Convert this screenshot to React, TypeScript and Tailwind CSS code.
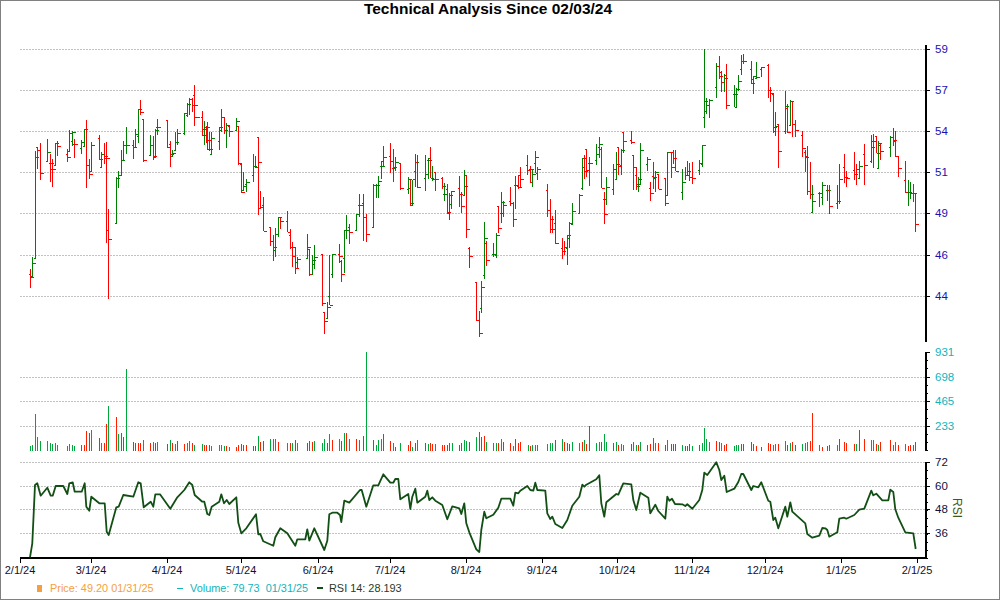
import React from 'react';

type Bar = [string, number, number, number, number, number];
type Vol = [string, number, number];

// all bar numbers were read off 3x crops: x, high, low, open, close
const partA: Bar[] = [
  ['r',91,808,863,823,832],['g',97,770,832,830,790],['g',107,453,775,775,472],['r',112,441,508,441,451],['r',121,430,540,451,520],
  ['g',142,418,484,484,457],['r',152,463,545,490,490],['r',157,478,560,508,508],['g',166,430,499,497,430],['r',172,424,467,430,439],
  ['r',202,448,486,463,472],['g',208,391,454,454,400],['g',218,394,439,424,397],['r',223,418,473,433,433],['g',244,421,462,445,427],
  ['g',254,388,442,439,388],['r',259,361,563,388,496],['r',268,478,536,496,523],['g',274,427,514,514,436],['r',298,406,481,415,478],
  ['g',304,457,502,502,463],['r',313,430,493,463,469],['r',319,427,728,475,475],['r',325,628,896,691,718],['g',349,530,670,670,536],
  ['g',355,514,565,535,526],['g',364,451,526,526,481],['g',370,424,481,481,436],['g',379,382,463,436,436],['r',400,421,476,436,442],
  ['g',406,388,442,442,403],['g',415,328,430,409,328],['r',421,301,346,328,337],['r',430,358,487,358,481],['g',451,406,466,466,436],
  ['r',460,409,481,436,469],['g',466,388,472,472,391],['r',472,358,406,382,382],['r',502,361,445,361,442],['r',511,424,500,433,463],
  ['g',517,450,472,469,460],['g',526,397,451,451,427],['g',532,388,436,427,400],['g',553,340,406,400,340],['g',562,310,352,346,313],
  ['g',568,295,346,313,298],['r',577,295,335,298,316],['r',583,256,377,286,316],['r',589,352,352,352,352],['r',607,334,409,352,406],
  ['g',613,364,436,388,388],['r',619,379,430,382,382],['r',622,367,451,382,420],['r',628,397,454,448,448],['g',634,397,463,463,415],
  ['g',658,382,451,424,382],['g',664,328,397,391,352],['r',673,352,403,352,391],['g',679,370,445,391,376],['r',688,379,411,379,394],
  ['g',709,355,391,391,364],['r',715,379,494,379,490],['r',724,490,580,493,577],['g',730,517,572,572,558],['g',739,538,575,553,547],
  ['g',760,463,545,526,499],['g',766,469,505,499,502],['r',775,412,644,412,487],['r',781,574,625,625,622],['r',790,592,694,615,694],
  ['r',811,682,739,682,724],['r',820,706,782,724,742],['g',826,685,770,751,702],['g',835,652,712,702,652],['r',841,652,686,652,664],
  ['r',862,634,697,664,697],['r',871,688,748,706,742],['r',877,727,800,742,769],['r',886,742,823,742,805],['g',892,772,805,787,778],
  ['g',922,702,775,775,742],['r',928,748,827,748,822],['g',937,764,822,822,781],['g',943,736,806,793,772],['r',967,763,919,763,910],
  ['r',973,937,1001,937,964],['g',982,907,955,955,922],['g',988,766,915,889,915],
];

// offset 990,300
const partB: Bar[] = [
  ['g',7,462,533,523,463],['r',28,433,490,463,469],['r',34,479,545,484,523],['g',43,391,518,475,391],['g',49,346,418,391,391],
  ['r',58,373,433,382,397],['g',79,343,394,391,343],['g',88,283,352,316,316],['r',100,283,424,310,352],['r',109,343,425,352,403],
  ['g',130,253,382,382,256],['g',139,253,293,256,256],['g',145,229,293,256,244],['g',154,184,236,199,199],['g',160,139,199,184,172],
  ['r',181,130,220,169,184],['r',190,148,245,205,202],['g',196,172,212,205,187],['r',211,190,271,190,265],['g',235,232,283,268,238],
  ['r',241,241,317,265,311],['g',247,241,316,316,238],['g',256,163,262,214,187],['r',262,166,265,187,262],['g',286,166,274,235,223],
  ['g',295,175,238,181,181],['r',301,142,235,175,235],['g',307,199,244,235,238],['r',316,217,272,217,238],['r',337,232,268,235,259],
  ['g',343,250,302,283,283],['r',352,253,343,268,337],['g',358,280,361,340,286],['g',364,274,328,313,274],['r',388,229,322,265,283],
  ['r',394,277,338,283,319],['g',403,211,286,286,259],['r',409,226,415,226,388],['r',418,442,503,445,469],['r',439,548,664,548,661],
  ['r',448,634,712,661,700],['g',454,544,640,625,562],['g',463,367,538,526,415],['r',469,424,499,430,481],['g',490,430,472,463,463],
  ['g',499,400,473,466,406],['r',505,319,400,319,385],['g',514,277,370,340,307],['g',520,304,352,340,316],['r',541,262,319,304,310],
  ['r',550,307,382,310,358],['g',556,229,328,256,256],['r',565,226,268,259,262],['r',571,202,265,226,238],['r',592,166,226,196,211],
  ['r',601,199,250,208,208],['g',607,208,262,247,223],['g',616,154,220,190,172],['g',622,202,241,220,208],['r',652,253,352,271,331],
  ['r',661,298,400,331,358],['r',667,349,400,388,388],['r',676,331,433,370,430],['r',697,415,478,445,454],['r',703,424,466,454,442],
  ['g',712,406,496,445,406],['g',718,367,445,415,370],['g',727,310,373,373,334],['g',748,283,340,340,286],['g',757,175,271,265,175],
  ['r',763,166,238,202,214],['r',769,148,232,148,211],['g',778,172,259,190,190],['g',799,133,196,181,163],['g',808,112,175,142,133],
  ['r',814,142,265,148,265],['r',823,277,371,298,343],['g',829,232,316,298,262],['g',850,193,286,268,208],['g',859,157,241,238,193],
  ['r',865,142,226,142,199],['g',874,148,226,196,151],['r',880,98,160,98,124],['r',904,94,133,121,127],['r',910,166,271,166,202],
  ['r',919,202,271,226,259],['g',925,232,275,253,238],['g',931,130,256,253,151],['g',952,172,213,193,178],['r',961,247,302,265,280],
  ['r',970,187,268,229,232],['g',976,214,276,235,217],['r',985,223,268,223,268],['r',1006,235,319,235,310],['g',1012,157,286,286,157],
];

// offset 2010,90
const partC: Bar[] = [
  ['r',3,367,443,367,411],['r',9,361,403,367,385],['r',15,361,423,385,423],['g',37,418,509,487,458],['g',46,412,451,458,437],
  ['g',52,394,437,437,424],['r',58,400,452,424,442],['r',67,397,461,442,445],['g',88,391,434,421,400],['g',97,345,412,403,345],
  ['g',103,58,293,262,214],['g',109,205,253,244,226],['g',118,208,263,226,211],['g',139,100,203,172,109],['r',148,79,146,109,139],
  ['r',154,124,187,127,157],['g',163,133,187,157,145],['r',169,103,238,135,226],['g',193,166,232,193,193],['g',199,175,232,232,178],
  ['g',205,136,184,178,154],['g',214,76,136,118,94],['g',220,73,103,94,94],['r',244,94,163,118,160],['g',250,139,193,148,139],
  ['g',259,97,148,145,142],['g',274,112,141,118,112],['r',295,103,203,106,181],['r',301,172,217,181,190],['r',310,193,308,193,292],
  ['g',316,247,317,304,289],['r',325,283,415,283,364],['g',346,184,313,304,229],['r',352,223,310,235,307],['g',361,211,289,286,214],
  ['r',367,214,321,214,283],['r',376,271,322,283,301],['r',397,304,382,316,355],['r',406,361,427,367,382],['r',412,349,496,379,484],
  ['r',421,397,508,484,493],['g',427,466,547,547,514],['r',448,487,532,490,490],['g',457,457,524,502,466],['g',472,466,512,481,481],
  ['r',478,466,553,481,529],['g',502,466,536,520,514],['g',508,403,523,514,448],['r',523,373,460,412,442],['r',529,424,470,442,445],
  ['r',553,367,451,421,433],['r',559,403,466,433,418],['g',568,394,445,445,409],['r',583,343,466,373,406],['g',604,316,400,394,352],
  ['g',610,313,415,334,334],['r',619,319,370,319,370],['g',625,334,415,415,340],['r',631,340,391,346,364],['g',661,319,380,352,323],
  ['r',670,295,347,323,331],['r',676,304,382,334,379],['r',685,379,440,379,415],['r',706,394,490,451,487],['g',715,451,529,487,487],
  ['g',721,457,506,487,490],['r',730,463,515,490,490],['r',736,490,605,490,583],
];

const shift = (rows: Bar[], ox: number, oy: number): Bar[] =>
  rows.map(([c, x, h, l, o, v]) => [c, x + ox, h + oy, l + oy, o + oy, v + oy]);

const bars = [...partA, ...shift(partB, 990, 300), ...shift(partC, 2010, 90)];

// volume: colour, x, top. first list has its base at 153, the other two at 333
const volA: Vol[] = [
  ['g',91,138],['g',97,136],['g',107,42],['g',112,112],['g',121,123],['g',142,124],['g',152,128],['g',157,132],['g',166,130],['g',172,135],
  ['g',202,138],['g',208,133],['g',218,136],['g',223,138],['r',244,135],['r',254,135],['r',259,93],['r',268,100],['g',274,90],['r',298,114],
  ['g',304,130],['r',313,128],['r',319,72],['g',325,18],['r',349,52],['g',355,103],['r',364,100],['r',370,111],['g',379,-93],['r',400,126],
  ['r',406,128],['r',415,130],['r',421,130],['g',430,120],['r',451,130],['g',460,127],['r',466,130],['g',472,127],['r',502,132],['g',511,120],
  ['r',517,130],['g',526,132],['r',532,124],['r',553,132],['g',562,130],['g',568,124],['r',577,130],['g',583,134],['g',607,132],['r',613,134],
  ['r',619,135],['r',628,136],['g',634,138],['g',658,135],['g',664,134],['g',673,138],['r',679,138],['g',688,140],['r',709,140],['r',715,135],
  ['r',724,132],['r',730,134],['r',739,135],['r',760,138],['r',766,138],['g',775,108],['r',781,127],['r',790,124],['g',811,117],['g',820,117],
  ['g',826,118],['r',835,127],['g',862,130],['r',871,130],['g',877,128],['r',886,120],['g',892,130],['r',922,130],['r',928,124],['r',937,125],
  ['g',943,123],['g',967,128],['g',973,118],['r',982,130],['g',988,102],
];
const volB: Vol[] = [
  ['r',7,300],['g',28,297],['r',34,304],['g',43,280],['r',49,280],['g',58,298],['r',79,297],['g',88,301],['r',100,288],['g',109,37],
  ['r',130,300],['g',139,316],['g',145,300],['g',154,298],['r',160,282],['r',181,304],['g',190,310],['r',196,320],['g',211,310],['r',235,316],
  ['r',241,304],['g',247,320],['r',256,310],['g',262,301],['r',286,310],['g',295,313],['r',301,310],['r',307,311],['g',316,313],['r',337,315],
  ['r',343,314],['r',352,314],['r',358,310],['g',367,310],['r',388,316],['r',394,310],['g',403,301],['g',409,304],['r',418,306],['g',439,292],
  ['r',448,276],['r',454,292],['r',463,288],['g',469,306],['g',490,310],['g',499,310],['r',505,308],['g',514,298],['r',520,306],['r',541,310],
  ['g',550,318],['r',556,298],['r',565,310],['r',571,306],['g',595,316],['r',601,318],['g',607,316],['g',616,316],['g',622,316],['g',652,312],
  ['g',661,310],['g',667,310],['r',676,300],['g',697,298],['r',703,306],['r',712,308],['r',718,311],['g',727,307],['g',748,308],['r',757,306],
  ['g',763,300],['r',769,312],['r',778,258],['g',799,308],['g',808,306],['r',814,306],['g',823,282],['g',829,306],['r',850,308],['g',859,306],
  ['r',865,316],['g',874,312],['g',880,315],['r',904,312],['g',910,306],['g',919,316],['r',925,316],['g',931,306],['r',952,316],['r',961,312],
  ['r',970,294],['g',976,308],['r',985,308],['r',1006,314],['g',1012,300],
];
const volC: Vol[] = [
  ['r',3,312],['r',9,313],['r',15,312],['g',37,316],['r',46,318],['r',52,318],['r',58,312],['g',67,318],['r',88,316],['g',97,310],
  ['g',103,264],['g',109,298],['g',118,306],['r',139,304],['r',148,306],['g',154,310],['r',163,314],['r',169,313],['g',193,318],['g',199,316],
  ['g',205,315],['r',214,312],['r',220,312],['r',244,307],['r',250,312],['r',259,318],['r',274,321],['r',295,310],['r',301,312],['g',310,316],
  ['g',316,313],['r',325,312],['g',346,304],['r',352,316],['g',361,310],['r',367,306],['r',376,316],['g',397,313],['g',406,310],['g',412,306],
  ['r',421,304],['r',427,219],['g',448,316],['r',457,322],['r',472,318],['r',478,316],['g',502,316],['r',508,297],['r',523,306],['r',529,308],
  ['r',553,312],['g',559,312],['r',568,270],['r',583,297],['g',604,301],['g',610,301],['r',619,312],['g',625,316],['r',631,306],['r',661,301],
  ['g',670,316],['g',676,307],['r',685,316],['g',706,312],['r',715,318],['r',721,316],['r',730,316],['r',736,307],
];

const volumes: { c: string; x: number; top: number }[] = [
  ...volA.map(([c, x, t]) => ({ c, x, top: 400 + t / 3 })),
  ...volB.map(([c, x, t]) => ({ c, x: x + 990, top: 340 + t / 3 })),
  ...volC.map(([c, x, t]) => ({ c, x: x + 2010, top: 340 + t / 3 })),
];

const rsiA = [[90,472],[97,430],[105,255],[112,250],[122,287],[142,263],[152,287],[158,287],[167,258],[190,258],[202,282],[208,250],[218,247],[224,275],[245,275],[254,250],[259,320],[268,332],[274,290],[298,310],[314,310],[320,395],[326,405],[349,322],[356,320],[370,285],[400,290],[415,247],[422,250],[431,322],[452,305],[460,320],[466,283],[480,283],[511,326],[532,292],[553,270],[568,247],[577,255],[584,285],[607,305],[613,305],[622,342],[628,345],[635,320],[658,305],[664,283],[672,310],[680,300],[688,312],[709,292],[715,368],[724,400],[739,385],[768,343],[775,403],[781,402],[790,424],[820,437],[826,412],[841,385],[862,400],[886,437],[892,418],[916,418],[922,388],[928,422],[943,385],[973,450],[982,422],[988,343]];
const rsiB = [[7,518],[22,518],[30,525],[34,546],[43,482],[58,488],[90,450],[95,450],[109,500],[130,436],[145,436],[160,403],[181,428],[190,428],[196,417],[205,417],[211,478],[235,462],[241,507],[247,470],[256,446],[262,488],[286,470],[292,452],[298,480],[307,472],[316,482],[337,495],[352,538],[367,499],[388,505],[394,522],[403,490],[409,550],[418,577],[439,628],[448,636],[454,570],[463,515],[469,535],[490,524],[505,503],[514,476],[541,476],[550,497],[556,458],[565,460],[571,452],[592,438],[601,450],[610,452],[616,428],[622,450],[646,452],[652,520],[661,537],[667,530],[676,552],[697,564],[712,540],[727,497],[748,470],[757,434],[763,440],[769,434],[799,418],[808,406],[814,490],[823,530],[829,487],[859,462],[865,464],[880,430],[904,433],[910,480],[919,510],[931,458],[955,473],[961,520],[976,494],[985,513],[1006,536],[1012,470],[1018,482]];
const rsiC = [[6,476],[15,492],[37,493],[46,498],[52,493],[67,506],[88,480],[97,450],[103,398],[112,405],[139,367],[148,390],[154,420],[163,407],[170,456],[193,446],[205,426],[214,402],[220,402],[244,450],[250,438],[265,442],[274,427],[295,482],[301,485],[310,540],[316,533],[325,565],[346,500],[352,530],[361,487],[367,515],[406,550],[412,582],[427,593],[448,587],[457,564],[466,565],[472,570],[478,590],[502,577],[508,536],[523,533],[529,536],[553,525],[568,509],[583,506],[604,452],[610,466],[619,461],[637,481],[655,481],[661,449],[670,456],[676,508],[685,533],[706,577],[730,580],[737,627]];

const rsiPoints = [
  ...rsiA.map(([x, y]) => `${(x / 3).toFixed(1)},${(400 + y / 3).toFixed(1)}`),
  ...rsiB.map(([x, y]) => `${(330 + x / 3).toFixed(1)},${(340 + y / 3).toFixed(1)}`),
  ...rsiC.map(([x, y]) => `${(670 + x / 3).toFixed(1)},${(340 + y / 3).toFixed(1)}`),
].join(' ');

const gridY = [49.5, 90.5, 131.5, 172.5, 213.5, 255.5, 296.5, 377.5, 401.5, 426.5, 462.5, 486.5, 509.5, 533.5];
const priceLabels: [string, number][] = [['59', 49], ['57', 90], ['54', 131], ['51', 172], ['49', 213], ['46', 255], ['44', 296]];
const volLabels: [string, number][] = [['931', 352], ['698', 377], ['465', 401], ['233', 426]];
const rsiLabels: [string, number][] = [['72', 462], ['60', 486], ['48', 509], ['36', 533]];
const dates: [string, number][] = [
  ['2/1/24', 20], ['3/1/24', 91], ['4/1/24', 167], ['5/1/24', 241], ['6/1/24', 318], ['7/1/24', 390], ['8/1/24', 466],
  ['9/1/24', 542], ['10/1/24', 617], ['11/1/24', 692], ['12/1/24', 765], ['1/1/25', 841], ['2/1/25', 917],
];

const volTicks = Array.from({ length: 13 }, (_, i) => 352 + i * 8.2);
const rsiTicks = Array.from({ length: 13 }, (_, i) => 462 + i * 8);

const Chart = () => (
  <svg viewBox="1 20 998 556" className="block w-[998px] h-[556px]">
    <g shapeRendering="crispEdges">
      {gridY.map(y => (
        <line key={y} x1={20} x2={925} y1={y} y2={y} stroke="#c2c2c2" strokeDasharray="2 1" />
      ))}
      {bars.map(([c, x, hi, lo, open, close], i) => {
        const bx = Math.floor(x / 3) + 0.5;
        const color = c === 'r' ? '#ff0000' : '#008000';
        return (
          <g key={i} stroke={color}>
            <line x1={bx} x2={bx} y1={hi / 3} y2={lo / 3} />
            <line x1={bx - 2} x2={bx} y1={Math.floor(open / 3) + 0.5} y2={Math.floor(open / 3) + 0.5} />
            <line x1={bx} x2={bx + 3} y1={Math.floor(close / 3) + 0.5} y2={Math.floor(close / 3) + 0.5} />
          </g>
        );
      })}
      {volumes.map(({ c, x, top }, i) => {
        const bx = Math.floor(x / 3) + 0.5;
        return <line key={i} x1={bx} x2={bx} y1={top} y2={451} stroke={c === 'r' ? '#ff2000' : '#00a83c'} />;
      })}
      {/* axes */}
      <g stroke="#000">
        <line x1={925.5} x2={925.5} y1={45} y2={342} strokeWidth={2} />
        <line x1={925.5} x2={925.5} y1={352} y2={451} strokeWidth={2} />
        <line x1={925.5} x2={925.5} y1={462} y2={559} strokeWidth={2} />
        <line x1={20} x2={925} y1={558} y2={558} strokeWidth={2} />
        {[...priceLabels, ...volLabels, ...rsiLabels].map(([l, y]) => (
          <line key={l} x1={926} x2={930} y1={y + 0.5} y2={y + 0.5} />
        ))}
        {volTicks.map(y => (
          <line key={y} x1={926} x2={928} y1={Math.round(y) + 0.5} y2={Math.round(y) + 0.5} />
        ))}
        {rsiTicks.map(y => (
          <line key={y} x1={926} x2={928} y1={y + 0.5} y2={y + 0.5} />
        ))}
        {dates.map(([l, x]) => (
          <line key={l} x1={x + 0.5} x2={x + 0.5} y1={558} y2={563} />
        ))}
      </g>
    </g>
    <polyline points={rsiPoints} fill="none" stroke="#124f14" strokeWidth={1.8} strokeLinejoin="round" />
    <g className="text-[11.5px]">
      {priceLabels.map(([l, y]) => (
        <text key={l} x={935} y={y + 4} fill="#1a10b0">{l}</text>
      ))}
      {volLabels.map(([l, y]) => (
        <text key={l} x={935} y={y + 4} fill="#10b4bc">{l}</text>
      ))}
      {rsiLabels.map(([l, y]) => (
        <text key={l} x={935} y={y + 4} fill="#101040">{l}</text>
      ))}
      {dates.map(([l, x]) => (
        <text key={l} x={x} y={574} textAnchor="middle" fill="#101030" className="text-[11px]">{l}</text>
      ))}
      <text transform="translate(953 498) rotate(90)" fill="#3c5a20" className="text-[12px]">RSI</text>
    </g>
  </svg>
);

export default function App() {
  return (
    <div className="w-[1000px] h-[600px] bg-white border border-[#808080] flex flex-col font-['Liberation_Sans',Arial,sans-serif] overflow-hidden">
      <div className="h-[16px] mb-[3px] pr-[24px] flex items-center justify-center text-[15.5px] font-bold text-black">
        Technical Analysis Since 02/03/24
      </div>
      <Chart />
      <div className="flex items-center h-[22px] pl-[36px] pt-[2px] text-[10.9px]">
        <span className="w-[5px] h-[7px] bg-[#f5a040] mr-[8px]" />
        <span className="text-[#f5a040] w-[127px] whitespace-pre">Price: 49.20 01/31/25</span>
        <span className="w-[6px] h-px bg-[#10b4bc] mr-[7px]" />
        <span className="text-[#10b4bc] w-[127px] whitespace-pre">Volume: 79.73  01/31/25</span>
        <span className="w-[6px] h-[2px] bg-[#124f14] mr-[6px]" />
        <span className="text-[#2c3a24] whitespace-pre">RSI 14: 28.193</span>
      </div>
    </div>
  );
}
